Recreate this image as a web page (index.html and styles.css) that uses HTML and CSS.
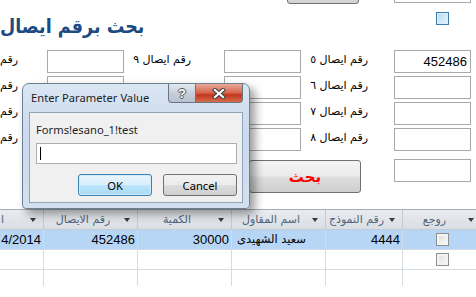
FILE: index.html
```html
<!DOCTYPE html>
<html lang="ar">
<head>
    <meta charset="UTF-8">
    <meta name="viewport" content="width=device-width, initial-scale=1.0">
    <title>بحث برقم ايصال</title>
    <link rel="stylesheet" href="styles.css">
</head>
<body>
<div class="form">
    <div class="top-strip">
        <div class="cut-btn"></div>
        <div class="cut-box"></div>
    </div>
    <div class="head">
        <h1 class="title" dir="rtl">بحث برقم ايصال</h1>
        <span class="check blue"></span>
    </div>
    <div class="fields">
        <div class="lbl edge" dir="rtl">رقم</div>
        <div></div>
        <div class="box"></div>
        <div class="lbl mid" dir="rtl">رقم ايصال ٩</div>
        <div class="box"></div>
        <div class="lbl right" dir="rtl">رقم ايصال ٥</div>
        <div class="box num">452486</div>

        <div class="lbl edge" dir="rtl">رقم</div>
        <div></div>
        <div class="box"></div>
        <div class="lbl mid" dir="rtl"></div>
        <div class="box"></div>
        <div class="lbl right" dir="rtl">رقم ايصال ٦</div>
        <div class="box"></div>

        <div class="lbl edge" dir="rtl">رقم</div>
        <div></div>
        <div class="box"></div>
        <div class="lbl mid" dir="rtl"></div>
        <div class="box"></div>
        <div class="lbl right" dir="rtl">رقم ايصال ٧</div>
        <div class="box"></div>

        <div class="lbl edge" dir="rtl">رقم</div>
        <div></div>
        <div class="box"></div>
        <div class="lbl mid" dir="rtl"></div>
        <div class="box"></div>
        <div class="lbl right" dir="rtl">رقم ايصال ٨</div>
        <div class="box"></div>
    </div>
    <div class="search-row">
        <button class="search">بحث</button>
        <div class="box"></div>
    </div>
</div>

<div class="sheet">
    <div class="hcell"><span class="htext" dir="rtl">ا</span><span class="arrow"></span></div>
    <div class="hcell"><span class="htext" dir="rtl">رقم الايصال</span><span class="arrow"></span></div>
    <div class="hcell"><span class="htext" dir="rtl">الكمية</span><span class="arrow"></span></div>
    <div class="hcell"><span class="htext" dir="rtl">اسم المقاول</span><span class="arrow"></span></div>
    <div class="hcell"><span class="htext" dir="rtl">رقم النموذج</span><span class="arrow"></span></div>
    <div class="hcell"><span class="htext" dir="rtl">روجع</span><span class="arrow"></span></div>

    <div class="cell sel num">4/2014</div>
    <div class="cell sel num">452486</div>
    <div class="cell sel num">30000</div>
    <div class="cell sel name" dir="rtl">سعيد الشهيدى</div>
    <div class="cell sel num">4444</div>
    <div class="cell sel ck"><span class="check"></span></div>

    <div class="cell"></div>
    <div class="cell"></div>
    <div class="cell"></div>
    <div class="cell"></div>
    <div class="cell"></div>
    <div class="cell ck"><span class="check"></span></div>

    <div class="cell tail"></div>
    <div class="cell tail"></div>
    <div class="cell tail"></div>
    <div class="cell tail"></div>
    <div class="cell tail"></div>
    <div class="cell tail"></div>
</div>

<div class="dialog">
    <div class="dlg-bar">
        <span class="dlg-title">Enter Parameter Value</span>
        <div class="dlg-ctrls">
            <span class="help">?</span>
            <span class="close">
                <svg width="14" height="11" viewBox="0 0 14 11">
                    <path d="M3 2 L11 9 M11 2 L3 9" stroke="#3b3f47" stroke-width="4.2" stroke-linecap="square"/>
                    <path d="M3 2 L11 9 M11 2 L3 9" stroke="#fff" stroke-width="2.2" stroke-linecap="square"/>
                </svg>
            </span>
        </div>
    </div>
    <div class="dlg-body">
        <div class="prompt">Forms!esano_1!test</div>
        <div class="param"><span class="caret"></span></div>
        <div class="dlg-btns">
            <button class="btn default">OK</button>
            <button class="btn">Cancel</button>
        </div>
    </div>
</div>
</body>
</html>
```

FILE: styles.css
```css
body {
    margin: 0;
    width: 476px;
    height: 297px;
    overflow: hidden;
    position: relative;
    background: #fff;
    font-family: "Liberation Sans", "DejaVu Sans", sans-serif;
    color: #000;
}

.form {
    height: 209px;
}

.top-strip {
    height: 4px;
    display: flex;
    overflow: hidden;
}
.cut-btn {
    width: 72px;
    height: 20px;
    margin: -16px 0 0 287px;
    border: 1px solid #707070;
    border-radius: 3px;
    background: #d4d4d4;
    box-sizing: border-box;
}
.cut-box {
    width: 77px;
    height: 20px;
    margin: -17px 0 0 35px;
    border: 1px solid #a9a9a9;
    box-sizing: border-box;
}

.head {
    height: 46px;
    display: flex;
    align-items: flex-start;
}
.title {
    margin: 6px 0 0 0;
    white-space: nowrap;
    font-family: "DejaVu Sans Condensed", "DejaVu Sans", sans-serif;
    font-size: 19.5px;
    line-height: 34px;
    font-weight: bold;
    color: #1d4a80;
}
.check {
    display: inline-block;
    width: 13px;
    height: 13px;
    box-sizing: border-box;
    border: 1px solid #8f8f8f;
    background: linear-gradient(135deg, #dcdcdc, #fbfbfb);
    box-shadow: inset 0 0 0 2px #f4f4f4;
}
.check.blue {
    margin: 8px 27px 0 auto;
    border-color: #3d7bad;
    background: linear-gradient(135deg, #b5dcf7, #e8f5fd);
    box-shadow: inset 0 0 0 1px #dcefff;
}

.fields {
    display: grid;
    grid-template-columns: 20px 27px 77px 100px 77px 93px 77px;
    grid-auto-rows: 23px;
    row-gap: 3px;
}
.box {
    border: 1px solid #a9a9a9;
    box-sizing: border-box;
    background: #fff;
}
.box.num {
    font-size: 13px;
    text-align: right;
    padding-right: 3px;
    line-height: 21px;
}
.lbl {
    font-family: "DejaVu Sans", sans-serif;
    font-size: 11px;
    white-space: nowrap;
    line-height: 20px;
}
.lbl.edge {
    padding-right: 2px;
}
.lbl.mid {
    padding-right: 33px;
}
.lbl.right {
    padding-right: 26px;
}

.search-row {
    display: flex;
    align-items: flex-start;
    margin-top: 8px;
    padding-left: 249px;
}
.search-row .box {
    width: 77px;
    height: 23px;
    margin-left: 33px;
}
.search {
    width: 112px;
    height: 33px;
    margin-top: 1px;
    border: 1px solid #707070;
    border-radius: 3px;
    background: linear-gradient(#f4f4f4, #ebebeb 48%, #dddddd 52%, #cfcfcf);
    font-family: "DejaVu Sans", sans-serif;
    font-size: 15px;
    font-weight: bold;
    color: #ff0000;
    padding: 0;
}

.sheet {
    display: grid;
    grid-template-columns: 43px 94px 94px 94px 77px 79px;
    grid-template-rows: 20px 20px 20px 16px;
    border-top: 1px solid #a7adb5;
}
.hcell {
    display: flex;
    align-items: center;
    background: linear-gradient(#e9ecf0, #d9dee4);
    border-left: 1px solid #c3cad2;
    border-bottom: 1px solid #c3cad2;
    box-sizing: border-box;
    overflow: hidden;
}
.hcell:first-child {
    border-left: none;
}
.hcell:first-child .htext {
    text-align: left;
    padding-left: 1px;
}
.htext {
    flex: 1;
    text-align: center;
    white-space: nowrap;
    font-family: "DejaVu Sans", sans-serif;
    font-size: 11px;
    color: #52637b;
}
.arrow {
    width: 0;
    height: 0;
    margin: 0 7px 0 2px;
    border-top: 4px solid #3a3a3a;
    border-left: 3px solid transparent;
    border-right: 3px solid transparent;
}

.cell {
    border-left: 1px solid #d4dbe3;
    border-bottom: 1px solid #d4dbe3;
    box-sizing: border-box;
    font-size: 13px;
    line-height: 19px;
    white-space: nowrap;
    overflow: hidden;
}
.cell:nth-child(6n + 1) {
    border-left: none;
}
.cell.sel {
    background: #b7d6f6;
}
.cell.num {
    text-align: right;
    padding-right: 2px;
}
.cell.name {
    font-family: "DejaVu Sans", sans-serif;
    font-size: 11.5px;
    text-align: right;
    padding-right: 19px;
}
.cell.ck {
    display: flex;
    align-items: center;
    justify-content: center;
}
.cell.tail {
    border-bottom: none;
}

.dialog {
    position: absolute;
    left: 22px;
    top: 83px;
    width: 228px;
    height: 126px;
    box-sizing: border-box;
    border: 1px solid #6f7f92;
    border-radius: 7px 7px 4px 4px;
    background: linear-gradient(#dbe6f3, #cad9ec 40%, #d3e0ef);
    box-shadow: 5px 5px 10px rgba(0, 0, 0, 0.4);
    display: flex;
    flex-direction: column;
    font-family: "Noto Sans", "DejaVu Sans", sans-serif;
}
.dlg-bar {
    height: 27px;
    display: flex;
    align-items: flex-start;
    justify-content: space-between;
}
.dlg-title {
    margin: 7px 0 0 8px;
    font-size: 11.2px;
    line-height: 14px;
    color: #1e1e1e;
}
.dlg-ctrls {
    display: flex;
    margin-right: 6px;
}
.help,
.close {
    height: 19px;
    box-sizing: border-box;
    border: 1px solid #6a7584;
    border-top: none;
    display: flex;
    align-items: center;
    justify-content: center;
}
.help {
    width: 28px;
    border-radius: 0 0 0 4px;
    background: linear-gradient(#e4e9ef, #c6cfd9 50%, #b6c1cd);
    font-family: "Liberation Sans", sans-serif;
    font-weight: bold;
    font-size: 13px;
    color: #fff;
    text-shadow: 1px 0 #4c5562, -1px 0 #4c5562, 0 1px #4c5562, 0 -1px #4c5562;
}
.close {
    width: 47px;
    border-left: none;
    border-radius: 0 0 4px 0;
    background: linear-gradient(#e9a99a, #d5644c 50%, #c1361c 60%, #d66b4c);
}
.dlg-body {
    margin: 1px 6px 0 6px;
    height: 91px;
    box-sizing: border-box;
    border: 1px solid #8fa3ba;
    background: #f0f0f0;
    padding: 9px 0 0 6px;
}
.prompt {
    font-size: 11.2px;
    line-height: 15px;
    color: #1e1e1e;
}
.param {
    width: 201px;
    height: 21px;
    margin-top: 6px;
    box-sizing: border-box;
    border: 1px solid #abadb3;
    background: #fff;
    padding: 3px 0 0 3px;
}
.caret {
    display: block;
    width: 1px;
    height: 13px;
    background: #000;
}
.dlg-btns {
    display: flex;
    gap: 11px;
    margin: 10px 0 0 42px;
}
.btn {
    width: 74px;
    height: 22px;
    padding: 0;
    border: 1px solid #707070;
    border-radius: 3px;
    background: linear-gradient(#f2f2f2, #ebebeb 48%, #dddddd 52%, #cfcfcf);
    font-family: "Noto Sans", "DejaVu Sans", sans-serif;
    font-size: 11.2px;
    color: #000;
}
.btn.default {
    border-color: #3c7fb1;
    background: linear-gradient(#e9f5fc, #d9effc 48%, #bee6fd 52%, #a7d9f5);
    box-shadow: inset 0 0 0 1px #cfeefe;
}
```
